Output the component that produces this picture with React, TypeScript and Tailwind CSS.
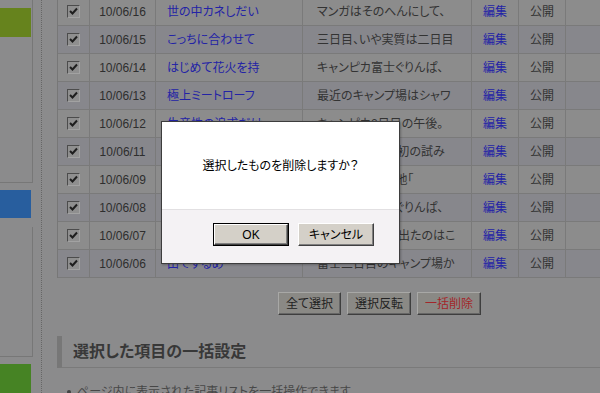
import React from "react";

const font = "font-['Liberation_Sans','Noto_Sans_CJK_JP',sans-serif] [font-feature-settings:'palt']";

const rows = [
  { date: "10/06/16", title: "世の中カネしだい", body: "マンガはそのへんにして、" },
  { date: "10/06/15", title: "こっちに合わせて", body: "三日目、いや実質は二日目" },
  { date: "10/06/14", title: "はじめて花火を持", body: "キャンピカ富士ぐりんぱ、" },
  { date: "10/06/13", title: "極上ミートローフ", body: "最近のキャンプ場はシャワ" },
  { date: "10/06/12", title: "生産性の追求だけ", body: "キャンピカ2日目の午後。" },
  { date: "10/06/11", title: "焚き火で燻製を", body: "キャンプ場での 初の試み" },
  { date: "10/06/09", title: "富士山のふもと", body: "キャンパーの聖地「" },
  { date: "10/06/08", title: "二日目の朝ごはん", body: "キャンピカ富士ぐりんぱ、" },
  { date: "10/06/07", title: "テントの設営", body: "朝起きて最初に出たのはこ" },
  { date: "10/06/06", title: "山でするめ", body: "富士二日目のキャンプ場か" },
];

function CheckBox() {
  return (
    <span className="w-[13px] h-[13px] border border-t-[#4c4c4c] border-l-[#4c4c4c] border-b-[#a2a2a2] border-r-[#a2a2a2] bg-[#8f8f8f] flex items-center justify-center">
      <svg width="9" height="9" viewBox="0 0 9 9">
        <path d="M1 4 L3.5 6.5 L8 1.5" stroke="#1e1e1e" strokeWidth="2" fill="none" />
      </svg>
    </span>
  );
}

function PageButton({ label, red }: { label: string; red?: boolean }) {
  return (
    <button
      className={`h-[23px] px-[7px] text-[12px] bg-[#8a8985] border border-t-[#a8a8a6] border-l-[#a8a8a6] border-b-[#3e3e3e] border-r-[#3e3e3e] shadow-[inset_-1px_-1px_0_#666] ${
        red ? "text-[#a3262a]" : "text-[#222]"
      }`}
    >
      {label}
    </button>
  );
}

export default function App() {
  return (
    <div className={`relative w-[600px] h-[393px] overflow-hidden bg-[#8b8b8c] flex ${font}`}>
      {/* sidebar */}
      <aside className="w-[33px] shrink-0 flex flex-col">
        <div className="h-[183px] border-r border-b border-[#777] pt-[8px]">
          <div className="w-[31px] h-[29px] bg-[#66831d]" />
        </div>
        <div className="mt-[7px] w-[31px] h-[29px] bg-[#285e9e]" />
        <div className="mt-[9px] h-[130px] border-r border-b border-[#777]" />
        <div className="mt-[7px] w-[31px] h-[29px] bg-[#468324]" />
      </aside>
      <div className="w-[9px] shrink-0 border-r border-dotted border-[#666]" />

      <main className="pl-[15px] -mt-[2px] shrink-0">
        {/* article list */}
        <div className="border-l border-[#777] w-[620px]">
          {rows.map((r, i) => (
            <div
              key={r.date}
              className={`flex h-[28px] border-b border-[#7a7a7a] text-[12px] ${
                i % 2 === 1 ? "bg-[#87878c]" : "bg-[#8c8c8c]"
              }`}
            >
              <div className="w-[32px] border-r border-[#7a7a7a] flex items-center justify-center">
                <CheckBox />
              </div>
              <div className="w-[66px] border-r border-[#7a7a7a] flex items-center justify-center text-[#2e2e2e]">
                {r.date}
              </div>
              <div className="w-[147px] border-r border-[#7a7a7a] flex items-center pl-[11px] text-[#2323a6] whitespace-nowrap overflow-hidden">
                {r.title}
              </div>
              <div className="w-[169px] border-r border-[#7a7a7a] flex items-center pl-[14px] text-[#333] whitespace-nowrap overflow-hidden">
                {r.body}
              </div>
              <div className="w-[47px] border-r border-[#7a7a7a] flex items-center justify-center text-[#2323a6]">
                編集
              </div>
              <div className="w-[47px] border-r border-[#7a7a7a] flex items-center justify-center text-[#333]">
                公開
              </div>
              <div className="w-[50px] border-r border-[#7a7a7a]" />
            </div>
          ))}
        </div>

        <div className="mt-[14px] pl-[221px] flex gap-[6px]">
          <PageButton label="全て選択" />
          <PageButton label="選択反転" />
          <PageButton label="一括削除" red />
        </div>

        <h2 className="mt-[21px] h-[32px] border-l-[5px] border-l-[#777] border-b border-b-[#7a7a7a] pl-[11px] flex items-center text-[16px] font-bold text-[#383838] w-[600px]">
          選択した項目の一括設定
        </h2>

        <ul className="mt-[16px] pl-[10px] text-[12px] leading-[16px] text-[#474747]">
          <li className="flex items-center gap-[6px]">
            <span className="w-[4px] h-[4px] rounded-full bg-[#444]" />
            ページ内に表示された記事リストを一括操作できます。
          </li>
        </ul>
      </main>

      {/* confirm dialog */}
      <div className="absolute left-[161px] top-[121px] w-[239px] h-[143px] border border-[#3d3d3d] bg-white flex flex-col shadow-[1px_1px_2px_rgba(0,0,0,0.25)]">
        <div className="h-[87px] flex items-center justify-center text-[12px] text-black">
          選択したものを削除しますか？
        </div>
        <div className="flex-1 bg-[#f4f2f4] border-t border-[#e2e0e2] pt-[13px] pl-[51px] flex gap-[9px] items-start">
          <button className="w-[76px] h-[23px] border border-black bg-[#d4d0c8] p-0">
            <span className="flex w-full h-full items-center justify-center text-[12px] text-black border border-t-white border-l-white border-b-[#404040] border-r-[#404040] shadow-[inset_-1px_-1px_0_#808080]">
              OK
            </span>
          </button>
          <button className="w-[76px] h-[23px] flex items-center justify-center text-[12px] text-black bg-[#d4d0c8] border border-t-white border-l-white border-b-[#404040] border-r-[#404040] shadow-[inset_-1px_-1px_0_#808080]">
            キャンセル
          </button>
        </div>
      </div>
    </div>
  );
}
